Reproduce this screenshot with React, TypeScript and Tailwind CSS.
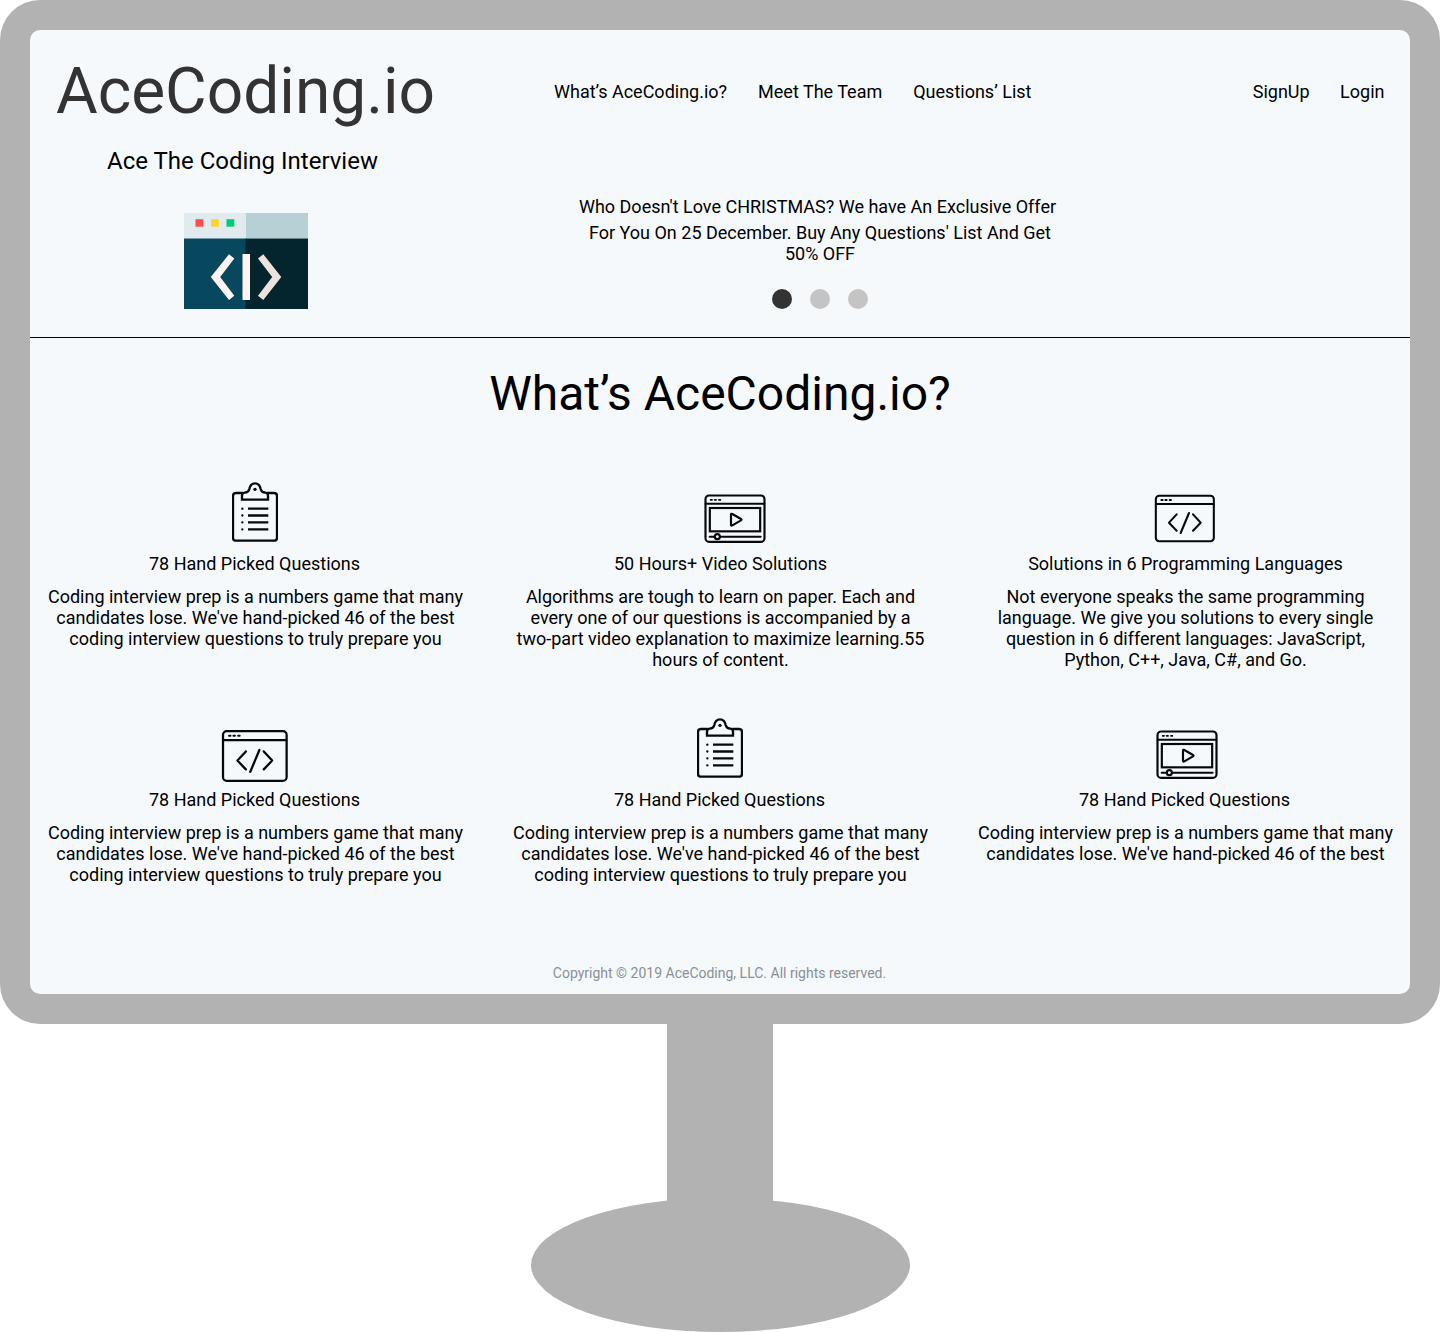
import type { ReactNode } from "react";

function BrandArt() {
  return (
    <svg className="block h-24 w-[124px]" viewBox="0 0 124 96">
      <rect width="62" height="25.5" fill="#e1eaee" />
      <rect x="62" width="62" height="25.5" fill="#b5d1d6" />
      <rect y="25.5" width="62" height="70.5" fill="#07485e" />
      <rect x="61.5" y="25.5" width="62.5" height="70.5" fill="#04242e" />
      <rect x="11.5" y="6.2" width="7.8" height="7.5" fill="#ff4b4b" />
      <rect x="27" y="6.2" width="7.8" height="7.5" fill="#ffd42a" />
      <rect x="42.5" y="6.2" width="7.8" height="7.5" fill="#00cc76" />
      <rect x="58.5" y="41" width="7.5" height="46" fill="#fff4f2" />
      <path d="M45 41.3 50.3 45.5 36.2 64 50.3 82.8 45 87 26.8 64Z" fill="#fff4f2" />
      <path d="M79.3 41.3 74 45.5 88.2 64 74 82.8 79.3 87 97.3 64Z" fill="#efe2dd" />
    </svg>
  );
}

function ClipboardIcon() {
  return (
    <svg className="h-[62px] w-[46px]" viewBox="36 18 138 186" fill="none" stroke="#06080a" strokeWidth="7" strokeLinejoin="round" strokeLinecap="round">
      <path d="M67 54H48q-9 0-9 9V188q0 9 9 9H162q9 0 9-9V63q0-9-9-9H143" />
      <path d="M66 74V62q0-8 8-9 12-1 14-11 3-17 17-17t17 17q2 10 14 11 8 1 8 9V74Z" strokeLinejoin="miter" />
      <circle cx="105" cy="43" r="5" fill="#06080a" stroke="none" />
      <path d="M84 101H145M84 121.500H145M84 142H145M84 163H145" strokeLinecap="butt" strokeWidth="7" />
      <path d="M67 101h.1M67 121.500h.1M67 142h.1M67 163h.1" />
    </svg>
  );
}

function VideoIcon() {
  return (
    <svg className="h-[49px] w-[62px]" viewBox="27 27 186 147" fill="none" stroke="#050709" strokeWidth="6.500" strokeLinejoin="round" strokeLinecap="round">
      <rect x="31.500" y="31.500" width="177" height="139" rx="11" />
      <path d="M32 56H208" strokeWidth="6" />
      <path d="M47 44.500h4M59 44.500h4M72 44.500h4" strokeWidth="5.500" />
      <rect x="44.500" y="69" width="151" height="70" strokeLinejoin="miter" />
      <path d="M108 89q0-4 4-2L138 102q3 2 0 4L112 121q-4 2-4-2Z" />
      <path d="M44 155H59M75 155H197" strokeWidth="6" />
      <circle cx="67" cy="155" r="7.500" />
    </svg>
  );
}

function CodeIcon({ className }: { className: string }) {
  return (
    <svg className={className} viewBox="27 27 186 147" fill="none" stroke="#050709" strokeWidth="6.200" strokeLinejoin="round" strokeLinecap="round">
      <rect x="32.500" y="32.500" width="174" height="136" rx="10" />
      <path d="M33 57H206" strokeWidth="6" />
      <path d="M49 45h4M61 45h4M74 45h4" strokeWidth="5.500" />
      <path d="M95 88 72 113 95 137M144 88 167 113 144 137M132 84 107 144" />
    </svg>
  );
}

const PREP = "Coding interview prep is a numbers game that many";
const BEST = "candidates lose. We've hand-picked 46 of the best";
const READY = "coding interview questions to truly prepare you";

const features: { icon: ReactNode; title: string; lines: string[] }[] = [
  { icon: <ClipboardIcon />, title: "78 Hand Picked Questions", lines: [PREP, BEST, READY] },
  {
    icon: <div className="ml-[30px]"><VideoIcon /></div>,
    title: "50 Hours+ Video Solutions",
    lines: [
      "Algorithms are tough to learn on paper. Each and",
      "every one of our questions is accompanied by a",
      "two-part video explanation to maximize learning.55",
      "hours of content.",
    ],
  },
  {
    icon: <CodeIcon className="h-[49px] w-[62px]" />,
    title: "Solutions in 6 Programming Languages",
    lines: [
      "Not everyone speaks the same programming",
      "language. We give you solutions to every single",
      "question in 6 different languages: JavaScript,",
      "Python, C++, Java, C#, and Go.",
    ],
  },
  { icon: <CodeIcon className="-mb-1 h-[54px] w-[68px]" />, title: "78 Hand Picked Questions", lines: [PREP, BEST, READY] },
  { icon: <ClipboardIcon />, title: "78 Hand Picked Questions", lines: [PREP, BEST, READY] },
  { icon: <div className="ml-1"><VideoIcon /></div>, title: "78 Hand Picked Questions", lines: [PREP, BEST] },
];

function Header() {
  return (
    <header className="flex h-[308px] border-b border-black">
      <div className="ml-[26px] flex w-[379px] flex-col items-center pt-6">
        <h1 className="text-[64px] leading-[75px] text-[#333333]">AceCoding.io</h1>
        <p className="mt-[18px] mr-[6px] text-2xl leading-7">Ace The Coding Interview</p>
        <div className="mt-[38px] ml-px"><BrandArt /></div>
      </div>
      <div className="ml-[119px] flex flex-1 flex-col pt-[51px] pr-[25.5px]">
        <nav className="flex leading-[21px]">
          <a className="mr-[31px]">What’s AceCoding.io?</a>
          <a className="mr-[31px]">Meet The Team</a>
          <a>Questions’ List</a>
          <a className="mr-[30.5px] ml-auto">SignUp</a>
          <a>Login</a>
        </nav>
        <div className="mt-[94px] flex w-[532px] flex-col items-center leading-[21px]">
          <p className="mr-[5px]">Who Doesn't Love CHRISTMAS? We have An Exclusive Offer</p>
          <p className="mt-[5px] text-center">
            For You On 25 December. Buy Any Questions' List And Get
            <br />
            50% OFF
          </p>
          <div className="mt-[25px] flex gap-[18px]">
            <span className="size-5 rounded-full bg-[#333333]" />
            <span className="size-5 rounded-full bg-[#c4c4c4]" />
            <span className="size-5 rounded-full bg-[#c4c4c4]" />
          </div>
        </div>
      </div>
    </header>
  );
}

export default function App() {
  return (
    <div className="flex h-[1332px] w-[1440px] flex-col items-center bg-white font-['Roboto',sans-serif] text-lg text-black">
      <div className="h-[1024px] w-full rounded-[40px] bg-[#b2b2b2] p-[30px]">
        <main className="flex h-full flex-col overflow-hidden rounded-[10px] bg-[#f5f9fc]">
          <Header />
          <h2 className="mt-7 text-center text-5xl leading-[56px]">What’s AceCoding.io?</h2>
          <section className="mt-[59px] grid auto-rows-[236px] grid-cols-3 gap-x-[45px] px-[15px]">
            {features.map((f, i) => (
              <article key={i} className="flex flex-col items-center leading-[21px] whitespace-nowrap">
                <div className="flex h-[62px] items-end">{f.icon}</div>
                <h3 className={f.title.startsWith("78") ? "mt-2.5 mr-px" : "mt-2.5 ml-px"}>{f.title}</h3>
                <p className="mt-3 ml-px text-center">
                  {f.lines.map((line) => (
                    <span key={line} className="block">{line}</span>
                  ))}
                </p>
              </article>
            ))}
          </section>
          <footer className="mt-auto pr-px pb-[13px] text-center text-sm leading-4 text-[#8a9095]">
            Copyright © 2019 AceCoding, LLC. All rights reserved.
          </footer>
        </main>
      </div>
      <div className="h-[190px] w-[106px] bg-[#b2b2b2]" />
      <div className="-mt-4 ml-px h-[134px] w-[379px] rounded-[50%] bg-[#b2b2b2]" />
    </div>
  );
}
